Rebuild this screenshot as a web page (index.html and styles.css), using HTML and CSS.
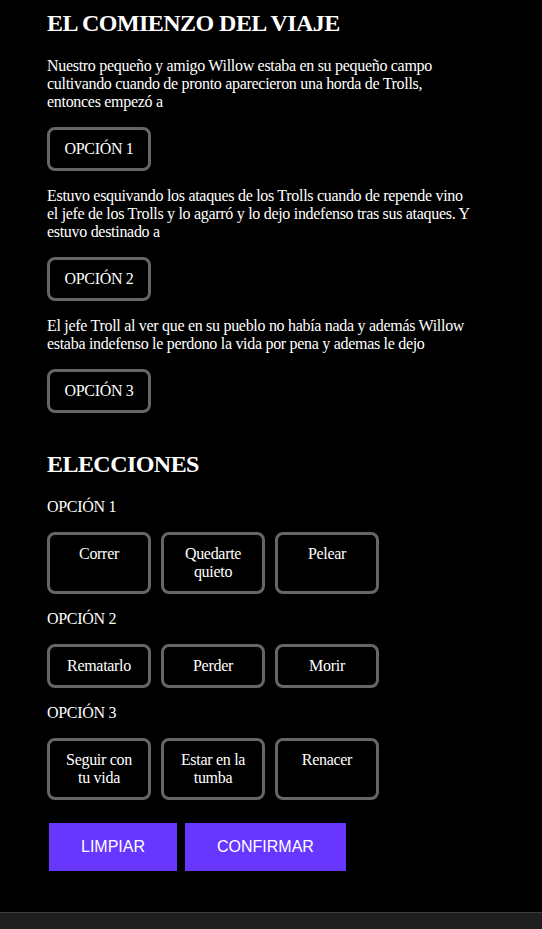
FILE: index.html
```html
<!DOCTYPE html>
<html lang="es">
<head>
<meta charset="utf-8">
<title>El comienzo del viaje</title>
<link rel="stylesheet" href="styles.css">
</head>
<body>
<div class="page">
  <main class="content">
    <section class="story">
      <h2 class="title">EL COMIENZO DEL VIAJE</h2>
      <p class="text">Nuestro pequeño y amigo Willow estaba en su pequeño campo cultivando cuando de pronto aparecieron una horda de Trolls, entonces empezó a</p>
      <button class="box-btn">OPCIÓN 1</button>
      <p class="text">Estuvo esquivando los ataques de los Trolls cuando de repende vino el jefe de los Trolls y lo agarró y lo dejo indefenso tras sus ataques. Y estuvo destinado a</p>
      <button class="box-btn">OPCIÓN 2</button>
      <p class="text">El jefe Troll al ver que en su pueblo no había nada y además Willow estaba indefenso le perdono la vida por pena y ademas le dejo</p>
      <button class="box-btn">OPCIÓN 3</button>
    </section>
    <section class="choices">
      <h2 class="title">ELECCIONES</h2>
      <p class="label">OPCIÓN 1</p>
      <div class="row">
        <button class="box-btn">Correr</button>
        <button class="box-btn">Quedarte quieto</button>
        <button class="box-btn">Pelear</button>
      </div>
      <p class="label">OPCIÓN 2</p>
      <div class="row">
        <button class="box-btn">Rematarlo</button>
        <button class="box-btn">Perder</button>
        <button class="box-btn">Morir</button>
      </div>
      <p class="label">OPCIÓN 3</p>
      <div class="row">
        <button class="box-btn">Seguir con tu vida</button>
        <button class="box-btn">Estar en la tumba</button>
        <button class="box-btn">Renacer</button>
      </div>
      <div class="actions">
        <button class="action-btn">LIMPIAR</button>
        <button class="action-btn">CONFIRMAR</button>
      </div>
    </section>
  </main>
  <div class="bottom-bar"></div>
</div>
</body>
</html>
```
FILE: styles.css
```css
html, body {
  margin: 0;
  padding: 0;
  height: 100%;
  background: #000;
}

body {
  font-family: "Liberation Serif", "Times New Roman", serif;
  color: #fff;
  font-size: 16px;
  line-height: normal;
  letter-spacing: -0.3px;
}

.page {
  min-height: 100%;
  display: flex;
  flex-direction: column;
}

.content {
  flex: 1;
  padding: 10px 0 0 47px;
  width: 430px;
}

.story {
  padding-bottom: 18px;
}

.title {
  font-size: 24px;
  font-weight: bold;
  letter-spacing: -0.55px;
  margin: 0 0 20px;
  line-height: normal;
}

.choices .title {
  margin-top: 20px;
}

.text {
  margin: 0 0 16px;
}

.story .box-btn + .text {
  margin-top: 16px;
}

.box-btn {
  display: flex;
  align-items: flex-start;
  justify-content: center;
  width: 104px;
  box-sizing: border-box;
  background: #000;
  color: #fff;
  font-family: "Liberation Serif", "Times New Roman", serif;
  font-size: 16px;
  letter-spacing: -0.3px;
  line-height: normal;
  padding: 10px 12px;
  border: 3px solid #666;
  border-radius: 8px;
  text-align: center;
  margin: 0;
}

.label {
  margin: 0 0 16px;
}

.row {
  display: flex;
  gap: 10px;
  margin: 0 0 16px;
}

.actions {
  display: flex;
  gap: 8px;
  margin: 23px 0 0 2px;
}

.action-btn {
  background: #6737ff;
  color: #fff;
  border: none;
  font-family: "Liberation Sans", Arial, sans-serif;
  font-size: 16px;
  letter-spacing: 0;
  line-height: 18px;
  padding: 15px 32px;
  margin: 0;
  border-radius: 0;
}

.bottom-bar {
  height: 16px;
  background: #1f1f1f;
  border-top: 1px solid #3c3c3c;
}
```
